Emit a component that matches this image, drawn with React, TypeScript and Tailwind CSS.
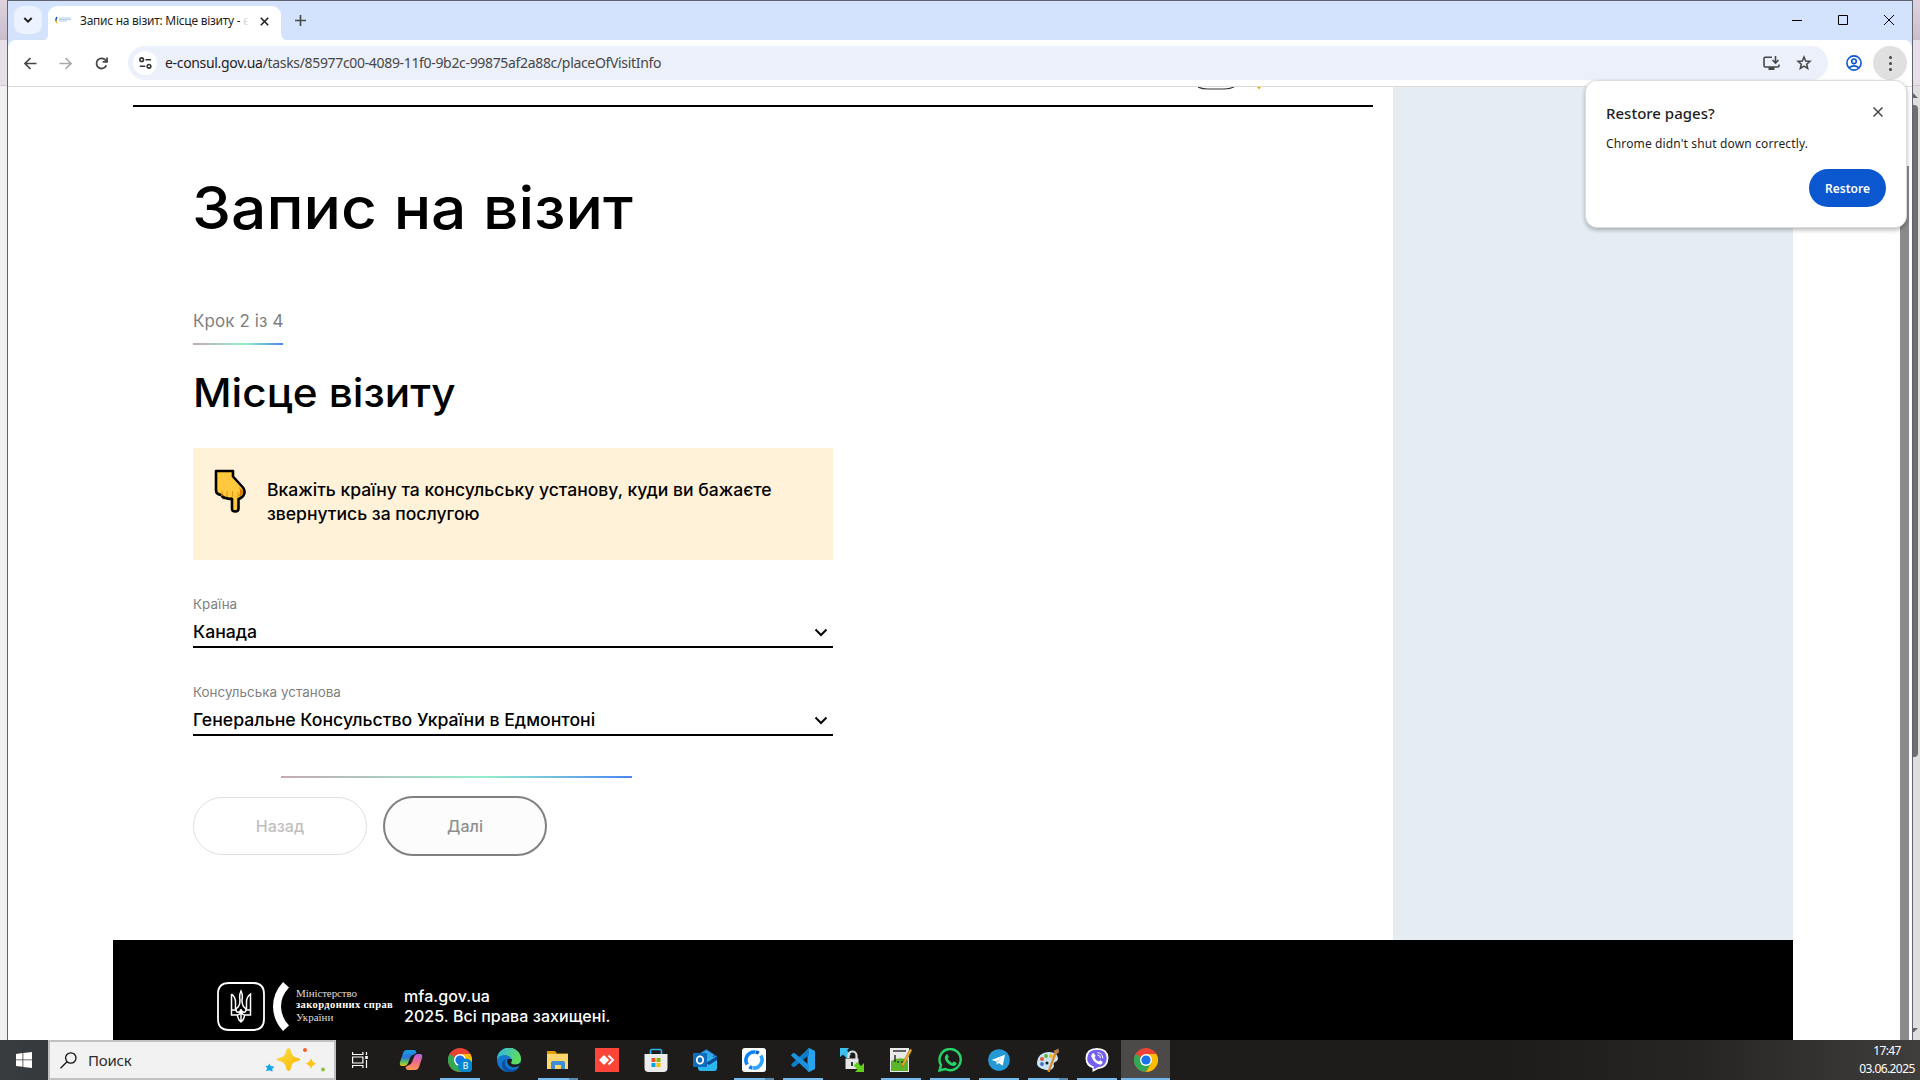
import React from "react";
import type { ReactNode } from "react";

const ui = "font-['Noto_Sans',sans-serif]";

function Tab() {
  return (
    <div className="flex h-10 items-start bg-[#d3e3fd] pl-[6px]">
      <div className="mt-[5px] flex h-7 w-7 items-center justify-center rounded-[9px] bg-[#ecf2fe]">
        <svg width="10" height="8" viewBox="0 0 10 8" fill="none" stroke="#1f1f1f" strokeWidth="2"><path d="M1.3 2 5 5.7 8.700 2" /></svg>
      </div>
      <div className="h-10 w-[6px] bg-white"><div className="h-10 w-[6px] rounded-br-[6px] bg-[#d3e3fd]" /></div>
      <div className="mt-[5px] flex h-[35px] w-[233px] items-start rounded-t-[9px] bg-white pl-[7px] pt-[6px]">
        <svg width="17" height="16" viewBox="0 0 17 16">
          <path d="M2 5C.8 6.500.8 7.500 1 9" stroke="#2453b8" strokeWidth="1.500" fill="none" />
          <path d="M1 9c.2 1 .8 1.800 1.500 2" stroke="#f5c518" strokeWidth="1.500" fill="none" />
          <path d="M4 6h12M4 7.500h12M4 9h8" stroke="#b3cbea" strokeWidth="1.200" />
        </svg>
        <div className="relative ml-[8px] h-[18px] w-[170px] whitespace-nowrap">
          <div className={`${ui} text-[12px] leading-[18px] tracking-[-0.27px] text-[#1f1f1f]`}>Запис на візит: Місце візиту - є</div>
          <div className="absolute right-0 top-0 h-[18px] w-[10px] bg-linear-to-r from-white/60 to-white" />
        </div>
        <svg className="ml-[10px] mt-[5px]" width="9" height="9" viewBox="0 0 9 9" stroke="#1f1f1f" strokeWidth="1.600"><path d="M.8.8l7.400 7.400M8.200.8.8 8.200" /></svg>
      </div>
      <div className="h-10 w-2 bg-white"><div className="h-10 w-2 rounded-bl-[8px] bg-[#d3e3fd]" /></div>
      <svg className="ml-[6px] mt-[14px]" width="11" height="11" viewBox="0 0 11 11" stroke="#444746" strokeWidth="1.600"><path d="M5.500 0v11M0 5.500h11" /></svg>
      <div className="ml-auto mr-[18px] mt-[14px] flex gap-9">
        <svg width="10" height="10" viewBox="0 0 10 10" stroke="#000"><path d="M0 5.500h10" /></svg>
        <svg width="10" height="10" viewBox="0 0 10 10" stroke="#000" fill="none"><path d="M.5.5h9v9h-9z" /></svg>
        <svg width="10" height="10" viewBox="0 0 10 10" stroke="#000"><path d="M0 0l10 10M10 0 0 10" /></svg>
      </div>
    </div>
  );
}

function Toolbar() {
  return (
    <div className="h-[46px] bg-[#d3e3fd]">
      <div className="flex h-[46px] items-center rounded-t-[8px] bg-white">
        <svg className="ml-[16px]" width="13" height="13" viewBox="0 0 13 13" fill="none" stroke="#444746" strokeWidth="1.700"><path d="M12.500 6.500H1.500M6.500 1 1 6.500l5.500 5.500" /></svg>
        <svg className="ml-[22px]" width="13" height="13" viewBox="0 0 13 13" fill="none" stroke="#a9abaa" strokeWidth="1.700"><path d="M.5 6.500h11M6.500 1 12 6.500 6.500 12" /></svg>
        <svg className="ml-[23px]" width="13" height="13" viewBox="0 0 13 13" fill="none" stroke="#444746" strokeWidth="1.800"><path d="M11.300 8.400A5.100 5.100 0 1 1 10.600 3.200L12 4.800" /><path d="M12 .5v4.300H7.700" /></svg>
        <div className="ml-[20px] flex h-[34px] w-[1700px] items-center rounded-full bg-[#ecf0fa] pl-[5px]">
          <div className="flex h-6 w-6 items-center justify-center rounded-full bg-white">
            <svg width="13" height="12" viewBox="0 0 13 12" fill="none" stroke="#333" strokeWidth="1.600"><circle cx="2.700" cy="2.700" r="1.800" /><path d="M6.500 2.700H12M.8 9.300h5.500" /><circle cx="10" cy="9.300" r="1.800" /></svg>
          </div>
          <span className={`${ui} ml-[8px] text-[14px] leading-5 tracking-[-0.33px] text-[#474747]`}><span className="text-[#1f1f1f]">e-consul.gov.ua</span>/tasks/85977c00-4089-11f0-9b2c-99875af2a88c/placeOfVisitInfo</span>
          <svg className="ml-auto" width="17" height="15" viewBox="0 0 17 15" fill="none" stroke="#444746" strokeWidth="1.600"><path d="M9 1.300H2.300Q1 1.300 1 2.600v7Q1 11 2.300 11h12.400Q16 11 16 9.700V8.500M12.500 0v6.500M9.500 4l3 3 3-3" /><path d="M5.500 12.500h6" strokeWidth="3" /></svg>
          <svg className="ml-[16px] mr-[16px]" width="16" height="16" viewBox="0 0 16 16" fill="none" stroke="#444746" strokeWidth="1.500"><path d="M8 2l1.700 4 4.300.4-3.300 2.800 1 4.300L8 11.200l-3.700 2.300 1-4.300L2 6.400 6.300 6z" /></svg>
        </div>
        <svg className="ml-[18px]" width="16" height="16" viewBox="0 0 16 16" fill="none" stroke="#0b57d0" strokeWidth="1.600"><circle cx="8" cy="8" r="7.100" /><circle cx="8" cy="6.300" r="2.300" /><path d="M3.200 12.700Q8 9 12.800 12.700" /></svg>
        <div className="ml-[11px] flex h-[34px] w-[34px] flex-col items-center justify-center gap-[3px] rounded-full bg-[#e0e0e0]">
          <i className="h-[3px] w-[3px] rounded-full bg-[#444]" /><i className="h-[3px] w-[3px] rounded-full bg-[#444]" /><i className="h-[3px] w-[3px] rounded-full bg-[#444]" />
        </div>
      </div>
    </div>
  );
}

function RestorePopup() {
  return (
    <div className={`${ui} absolute left-[1585px] top-[80px] h-[148px] w-[322px] rounded-[12px] border border-[#dcdcdc] bg-white pl-[20px] pr-[20px] shadow-[0_2px_4px_rgba(0,0,0,0.28)]`}>
      <div className="mt-[20px] flex items-start justify-between">
        <span className="text-[15px] font-medium leading-[24px] text-[#1f1f1f]">Restore pages?</span>
        <svg className="mr-[3px] mt-[6px]" width="10" height="10" viewBox="0 0 10 10" stroke="#444746" strokeWidth="1.500"><path d="M.5.500l9 9M9.500.500l-9 9" /></svg>
      </div>
      <div className="mt-[10px] text-[12px] leading-[18px] tracking-[0.14px] text-[#1f1f1f]">Chrome didn't shut down correctly.</div>
      <div className="mt-[16px] flex justify-end">
        <div className="flex h-[38px] w-[77px] items-center justify-center rounded-full bg-[#0b57d0] pt-px text-[12px] font-semibold text-white">Restore</div>
      </div>
    </div>
  );
}

function Field({ label, value }: { label: string; value: string }) {
  return (
    <div className="mt-9 w-[640px] border-b-2 border-black pb-[2px]">
      <div className="w-max origin-left scale-x-[1.034] text-[13px] leading-4 text-[#7f7f7f]">{label}</div>
      <div className="mt-2 flex h-6 items-center justify-between pr-[5px] text-[17px] font-medium leading-6">
        <span className="origin-left scale-x-[1.038]">{value}</span>
        <svg width="14" height="9" viewBox="0 0 14 9" fill="none" stroke="#000" strokeWidth="2"><path d="M1.500 1.500 7 7l5.500-5.500" /></svg>
      </div>
    </div>
  );
}

function Hand() {
  return (
    <svg className="ml-[21px] mt-[21px] shrink-0" width="33" height="45" viewBox="0 0 33 45">
      <path d="M2 2h17v5.500l10 11q2.500 3.500 1 7-1.500 3.500-5.500 4.500v9.500Q24.500 42.500 21.200 42.500T18 39.500V29.500q-3 1-6-.5-3.500 0-4.500-3-5.500-.5-5.500-5z" fill="#ffc83d" stroke="#000" strokeWidth="2.600" strokeLinejoin="round" />
      <path d="M25 18q2 4 0 9 5 0 4-5z" fill="#d67d00" />
      <path d="M8 22v5M13 22v6M18.500 22v7M24 23v5" stroke="#e09a1a" strokeWidth="1.200" />
    </svg>
  );
}

function Footer() {
  return (
    <div className="ml-[105px] flex h-[100px] w-[1680px] shrink-0 bg-black text-white">
      <svg className="ml-[104px] mt-[42px]" width="48" height="49" viewBox="0 0 48 49" fill="none" stroke="#fff">
        <path d="M12 1h24Q47 1 47 12v25Q47 48 36 48H12Q1 48 1 37V12Q1 1 12 1z" strokeWidth="1.800" />
        <path d="M24 9q-2 4-1 9 0 6-3 8 -2 2 0 4 2 1 4-2 2 3 4 2 2-2 0-4-3-2-3-8 1-5-1-9zM24 27v13M14.500 12v21h6q0 4 3.500 7 3.500-3 3.500-7h6V12q-4 3-4 8v7M14.500 12q4 3 4 8v7M14.500 28h5M28.500 28h5M20.500 33q3.500-1 3.500-5 0 4 3.500 5" strokeWidth="1.500" />
      </svg>
      <svg className="ml-[8px] mt-[42px]" width="16" height="49" viewBox="0 0 16 49"><path d="M10 0l6 5.500Q8 14 8 24.500T16 43.500L10 49Q0 38 0 24.500T10 0z" fill="#fff" /></svg>
      <div className="ml-[7px] mt-[47px] w-[108px] whitespace-nowrap font-['Liberation_Serif',serif] text-[11px] leading-[12px]">
        <div className="tracking-[-0.1px] text-[#ddd]">Міністерство</div>
        <div className="text-[10.500px] font-bold tracking-[0.4px]">закордонних справ</div>
        <div className="text-[#ddd]">України</div>
      </div>
      <div className="mt-[46px] text-[16px] font-medium leading-5 tracking-[0.07px]">
        <div>mfa.gov.ua</div>
        <div>2025. Всі права захищені.</div>
      </div>
    </div>
  );
}

function ChromeLogo() {
  return (
    <>
      <circle cx="12" cy="12" r="12" fill="#ea4335" />
      <path d="M1.600 6A12 12 0 0 0 12 24L17.200 15 12 12z" fill="#34a853" />
      <path d="M12 24A12 12 0 0 0 22.400 6H12v6l5.200 3z" fill="#fbbc04" />
      <circle cx="12" cy="12" r="6" fill="#fff" />
      <circle cx="12" cy="12" r="4.600" fill="#1a73e8" />
    </>
  );
}

const icons: { art: ReactNode; run: "none" | "one" | "many" | "active" }[] = [
  { run: "none", art: (<>
    <defs>
      <linearGradient id="cpa" x1="0" y1="0" x2="0" y2="1"><stop offset="0" stopColor="#1aa0e8" /><stop offset=".45" stopColor="#2a72d8" /><stop offset=".75" stopColor="#57c25a" /><stop offset="1" stopColor="#f0c419" /></linearGradient>
      <linearGradient id="cpb" x1="0" y1="0" x2="0" y2="1"><stop offset="0" stopColor="#b560e8" /><stop offset=".5" stopColor="#f06a8a" /><stop offset="1" stopColor="#fd9a56" /></linearGradient>
    </defs>
    <path d="M8 2h7q2 0 2.500 3L14 7q-2 0-3 3l-2 5q-1 3-4 3H3q-3 0-2-4l3-9q1-3 4-3z" fill="url(#cpa)" />
    <path d="M16 22H9q-2 0-2.500-3L10 17q2 0 3-3l2-5q1-3 4-3h2q3 0 2 4l-3 9q-1 3-4 3z" fill="url(#cpb)" />
  </>) },
  { run: "one", art: (<><ChromeLogo /><circle cx="17.500" cy="18" r="7.500" fill="#0288d1" /><text x="17.500" y="21.200" fontSize="9" fill="#fff" textAnchor="middle" fontFamily="Roboto">B</text></>) },
  { run: "none", art: (<>
    <defs><linearGradient id="edg" x1="0" y1="0" x2="1" y2=".4"><stop offset="0" stopColor="#2fb4ee" /><stop offset="1" stopColor="#5fdc5a" /></linearGradient></defs>
    <circle cx="12" cy="12" r="12" fill="#1477cf" />
    <path d="M0 11.500A12 12 0 0 1 24 11.500q0 5-6 5-4 0-4-2 1.500-2 .5-4Q12.500 7 8 7 2 7 0 11.500z" fill="url(#edg)" />
    <path d="M9 11q-3 6 2 9.500 5 3 11-1-5 6-12 4.300Q4 21 5 15q.8-3 4-4z" fill="#0c4f9f" />
    <path d="M10.500 11q-1.500 5 3 7.500 4 2 9.500-1l1-5q-1 4.500-6 4-4 0-4-2 1.500-1.500.5-3.500z" fill="#1e1c1b" />
  </>) },
  { run: "many", art: (<><path d="M1 3h8l2 2.500h11V19H1z" fill="#e3a100" /><path d="M1 6h21v15H1z" fill="#ffd66b" /><path d="M5 21v-6q0-2 2-2h10q2 0 2 2v6h-4v-4H9v4z" fill="#3b8fd8" /></>) },
  { run: "none", art: (<><path d="M0 0h24v24H0z" fill="#ff4538" /><path d="M4 12l5-5 5 5-5 5z" fill="#fff" /><path d="M13.500 7.500 18 12l-4.500 4.500" fill="none" stroke="#fff" strokeWidth="2" /></>) },
  { run: "none", art: (<><path d="M6.500 7V3q0-1.500 1.500-1.500h8q1.500 0 1.500 1.500v4" fill="none" stroke="#27b1ee" strokeWidth="1.700" /><path d="M.5 6h23v14q0 4-4 4h-15q-4 0-4-4z" fill="#ececec" /><path d="M7.500 10h4v4h-4z" fill="#f25022" /><path d="M12.500 10h4v4h-4z" fill="#7fba00" /><path d="M7.500 15h4v4h-4z" fill="#00a4ef" /><path d="M12.500 15h4v4h-4z" fill="#ffb900" /></>) },
  { run: "none", art: (<><path d="M3 8 13 1l11 7v5H3z" fill="#1b5fb0" /><path d="M8 5l6-3 7 5-6 6z" fill="#34a8ea" /><path d="M5 12l19-4v12q0 3-3 3H8q-3 0-3-3z" fill="#2bb8ee" /><path d="M13 15 24 8v4l-8 5z" fill="#0a4b98" /><path d="M0 6q0-1 1-1h12q1 0 1 1v12q0 1-1 1H1q-1 0-1-1z" fill="#0f6cbd" /><ellipse cx="7" cy="12" rx="3.200" ry="3.600" fill="none" stroke="#fff" strokeWidth="1.800" /></>) },
  { run: "many", art: (<><rect width="24" height="24" rx="3" fill="#fff" /><path d="M5.200 16.500A8.200 8.200 0 0 1 13 4" fill="none" stroke="#0a84f5" strokeWidth="3.600" /><path d="M13.500 4q1.700.2 3.200 1.200" fill="none" stroke="#0a5fd0" strokeWidth="3.600" /><path d="M18.800 7.500A8.200 8.200 0 0 1 11 20" fill="none" stroke="#2fa4ff" strokeWidth="3.600" /><path d="M10.500 20q-1.700-.2-3.200-1.200" fill="none" stroke="#0a84f5" strokeWidth="3.600" /></>) },
  { run: "one", art: (<><path d="M18 0l6 3v18l-6 3-1.500-1V1z" fill="#29a5f0" /><path d="M18 0 1 15.500 0 17l2 2h1.500L18 7z" fill="#0d7fca" /><path d="M18 24 1 8.500 0 7.500 2 5h1.500L18 17z" fill="#1b92de" /></>) },
  { run: "none", art: (<><path d="M0 0h9L7 2.500l4 4-4 4-4-4L0 9z" fill="#3ec0ee" /><path d="M8.500 10V7.500a4 4 0 0 1 8 0V11" fill="none" stroke="#ddd" strokeWidth="2.200" /><path d="M5.500 10.500h13V21h-13z" fill="#e6e6e6" /><path d="M11 14h2v4h-2z" fill="#333" /><path d="M24 24h-9l2.500-2.500-4-4 3.500-3.500 4 4L24 15z" fill="#5fd01c" /></>) },
  { run: "one", art: (<><path d="M1 0h19v24H1z" fill="#e9e9e9" /><path d="M2 13q8-5 17-1v11H2z" fill="#5ab52a" /><path d="M4 3h13M6 7v7M8 14h2M12 14h2" stroke="#333" strokeWidth="1.500" /><path d="M21 1l2 1-8 15-2 2v-3z" fill="#f0b429" stroke="#9b6a1a" strokeWidth=".6" /></>) },
  { run: "one", art: (<><path d="M1.500 22.500 3 17A10.600 10.600 0 1 1 7.200 21z" fill="#1e1c1b" stroke="#25d366" strokeWidth="2.400" /><path d="M8.200 6.500q1.300-.7 1.800.8l.7 1.700q.1.700-1 1.700 1.500 3 4.500 4.200 1.200-1.700 1.800-1.500l2.500 1.300q.5 3-3 3.300-3 0-6.500-3.500-4-4.300-.8-8z" fill="#25d366" /></>) },
  { run: "one", art: (<><circle cx="12" cy="12" r="10.800" fill="#2499d6" /><path d="M4.500 12 18 6.700l-2.300 11-4-2.800-2 1.900-.3-3.300z" fill="#fff" /><path d="M9.400 13.500 15.500 9l-5 5.500-.8 2.300z" fill="#a9d3ea" /></>) },
  { run: "many", art: (<><path d="M1 14Q2 5 12 4q9-.5 10 6 0 3-3 4-2 1-1 4-1 5-8 4Q0 20 1 14z" fill="#c9e4f5" /><circle cx="6" cy="11" r="2" fill="#e2572f" /><circle cx="10" cy="8" r="1.900" fill="#5cb531" /><circle cx="15" cy="8" r="1.900" fill="#f3b91f" /><circle cx="6" cy="16" r="1.900" fill="#4770c9" /><circle cx="11" cy="15" r="1.500" fill="#1e1c1b" /><path d="M19.500 5 12.500 24" stroke="#d98a2b" strokeWidth="2.200" /><path d="M17.500 3l5-2.500L23 4l-3 3z" fill="#b97f4a" /></>) },
  { run: "one", art: (<><path d="M12 0q11 0 11.500 10Q23 20.500 13 21l-5.500 3v-4Q.5 18 .5 10 1 0 12 0z" fill="#fff" /><path d="M12 1.800q9.500 0 9.800 8.400-.4 8.600-9 9l-4 2.400v-3.200Q2.200 16.500 2.200 10.200 2.700 1.800 12 1.800z" fill="#7360f2" /><path d="M7.500 5.500q1.300-.8 2 .5l1 1.700q.2.800-1 1.600 1 3 4 4.200 1.200-1.400 2-1l2 1.300q.5 2-2 3Q9 15.500 6.300 8.500q-.2-2 1.200-3z" fill="#fff" /><path d="M12.500 4.700q5 .2 5.300 5.600M12.500 7q2.800.2 3 3.200" stroke="#fff" fill="none" /></>) },
  { run: "active", art: <ChromeLogo /> },
];

function Taskbar() {
  return (
    <div className={`${ui} flex h-10 w-[1920px] shrink-0 bg-[linear-gradient(90deg,#3a3d3f_0px,#36393b_48px,#1e1c1b_336px,#1e1c1b_1500px,#262523_1700px,#403e3c_1920px)]`}>
      <div className="flex w-12 items-center justify-center">
        <svg width="16" height="16" viewBox="0 0 16 16" fill="#fff"><path d="M0 2l6.500-1v6.500H0zM7.300.9 16 0v7.500H7.300zM0 8.300h6.500v6.500L0 14zM7.300 8.300H16V16l-8.700-1.100z" /></svg>
      </div>
      <div className="flex w-[288px] items-center border-2 border-[#c1c1c1] bg-[#f2f2f2]">
        <svg className="ml-[10px]" width="17" height="17" viewBox="0 0 17 17" fill="none" stroke="#111" strokeWidth="1.300"><circle cx="10.800" cy="6" r="5.200" /><path d="M7 9.800.5 16.300" /></svg>
        <span className="ml-[11px] text-[15px] tracking-[-0.2px] text-[#2b2b2b]">Поиск</span>
        <svg className="ml-auto mr-[8px]" width="62" height="26" viewBox="0 0 62 26">
          <defs><linearGradient id="st" x1="0" y1="0" x2="1" y2="1"><stop offset="0" stopColor="#ffe04a" /><stop offset="1" stopColor="#f7b500" /></linearGradient></defs>
          <path d="M24.500 1q1.800 0 2.800 4.500 1 4 5 5 4.200 1 4.200 2t-4.200 2q-4 1-5 5-1 4.500-2.800 4.500t-2.800-4.500q-1-4-5-5-4.200-1-4.200-2t4.200-2q4-1 5-5Q22.700 1 24.500 1z" fill="url(#st)" />
          <path d="M47 11q1.200 4.800 5.500 5.700Q48.200 17.700 47 22q-1.200-4.300-5.500-5.300Q45.800 15.800 47 11z" fill="#fcc419" />
          <path d="M5 16.500l2.200 2.700 3.300.3-2.200 2.300.2 3-3-1.500-3.500 1 1.200-3-1.700-2.300 2.800-.3z" fill="#12a5f0" />
          <circle cx="41" cy="3" r="2" fill="#f4602a" /><circle cx="59" cy="22.500" r="2" fill="#8bc34a" />
        </svg>
      </div>
      <div className="flex w-[50px] items-center pl-4">
        <svg width="16" height="16" viewBox="0 0 16 16" fill="none" stroke="#fff" strokeWidth="1.200"><path d="M.6 0v2.500h10.300V0M.6 16v-2.500h10.300V16M.6 5h10.300v6H.6zM14.500 0v3M14.500 8v8" /><path d="M13.200 4h2.600v3h-2.600z" fill="#fff" stroke="none" /></svg>
      </div>
      {icons.map(({ art, run }, i) => (
        <div key={i} className={run === "active" ? "flex w-[49px] flex-col items-center bg-[#4b4a49]" : "flex w-[49px] flex-col items-center"}>
          <svg className="mt-[8px] shrink-0" width="24" height="24" viewBox="0 0 24 24">{art}</svg>
          {run === "one" && <div className="mt-auto h-[2px] w-10 bg-[#76b9ed]" />}
          {run === "many" && <div className="mt-auto flex h-[2px] w-10"><div className="w-[31px] bg-[#76b9ed]" /><div className="flex-1 bg-[#5a8ab0]" /></div>}
          {run === "active" && <div className="mt-auto h-[2px] w-full bg-[#76b9ed]" />}
        </div>
      ))}
      <div className="ml-auto w-[66px] whitespace-nowrap pt-[2px] text-center text-[12px] leading-[18px] tracking-[-0.6px] text-white">
        <div>17:47</div>
        <div>03.06.2025</div>
      </div>
    </div>
  );
}

function Backdrop({ side }: { side: "left" | "right" }) {
  return (
    <div className={side === "left" ? "flex w-[7px] flex-col bg-[#f1f1f1]" : "flex w-[7px] flex-col bg-[#dedede]"}>
      <div className="h-10 bg-linear-to-b from-[#dcd3df] to-[#c9bdca]" />
      <div className="h-[46px] border-b border-[#cfc6d0] bg-[#e6dfe8]" />
      {side === "right" && (<>
        <svg className="mt-[7px]" width="7" height="5" viewBox="0 0 7 5"><path d="M0 0l5 5H0z" fill="#666" /></svg>
        <div className="mt-[7px] h-[652px] w-[5px] rounded-r-[4px] bg-[#6f6f6f]" />
        <svg className="mt-[271px]" width="7" height="6" viewBox="0 0 7 6"><path d="M0 0h5L1 4H0z" fill="#666" /></svg>
      </>)}
    </div>
  );
}

export default function App() {
  return (
    <div className="relative flex h-[1080px] w-[1920px] flex-col overflow-hidden bg-white">
      <div className="flex h-[1040px] shrink-0">
        <Backdrop side="left" />
        <div className="flex w-[1906px] flex-col border-x border-t border-[#61646e] bg-white">
          <div className="-mt-px border-t border-[#61646e]"><Tab /></div>
          <div className="-mt-px"><Toolbar /></div>
          <div className="flex h-[954px] overflow-hidden border-t border-[#dcdcdc]">
            <div className="flex w-[1892px] shrink-0 flex-col font-['Inter',sans-serif] text-black">
              <div className="flex h-[853px] shrink-0">
                <div className="w-[1385px] pl-[125px]">
                  <div className="flex h-[18px] items-start pl-[1065px]">
                    <svg width="64" height="3" viewBox="0 0 64 3" fill="none"><path d="M0 0q4 2 10 2h16q6 0 10-2" stroke="#333" strokeWidth="1.200" /><path d="M59 0h4l-2 2.500z" fill="#f5a800" /></svg>
                  </div>
                  <div className="h-[2px] w-[1240px] bg-black" />
                  <div className="pl-[60px]">
                    <h1 className="-ml-px mt-[65px] w-max origin-left scale-x-[1.056] text-[59px] font-medium leading-[72px]">Запис на візит</h1>
                    <div className="mt-[65px] text-[17px] leading-6 tracking-[0.1px] text-[#7f7f7f]">Крок 2 із 4</div>
                    <div className="mt-[10px] h-[2px] w-[90px] bg-[linear-gradient(90deg,#c4aab2,#94eecb_58%,#4a86f7)]" />
                    <h2 className="mt-6 w-max origin-left scale-x-[1.057] text-[40px] font-medium leading-[48px]">Місце візиту</h2>
                    <div className="mt-[31px] flex h-[112px] w-[640px] bg-[#fff2d9]">
                      <Hand />
                      <div className="ml-[20px] mt-[30px] h-12 origin-left scale-x-[1.032] whitespace-nowrap text-[17px] font-medium leading-6">Вкажіть країну та консульську установу, куди ви бажаєте<br />звернутись за послугою</div>
                    </div>
                    <Field label="Країна" value="Канада" />
                    <Field label="Консульська установа" value="Генеральне Консульство України в Едмонтоні" />
                    <div className="ml-[88px] mt-10 h-[2px] w-[351px] bg-[linear-gradient(90deg,#c4aab2,#94eecb_58%,#4a86f7)]" />
                    <div className="mt-[18px] flex items-center gap-4 text-[16px] font-medium">
                      <div className="flex h-[58px] w-[174px] items-center justify-center rounded-full border border-[#e0e0e0] text-[#bfbfbf]">Назад</div>
                      <div className="flex h-[60px] w-[164px] items-center justify-center rounded-full border-2 border-[#808080] bg-[#fcfcfc] text-[#8f8f8f]">Далі</div>
                    </div>
                  </div>
                </div>
                <div className="w-[400px] bg-[#e5edf3]" />
              </div>
              <Footer />
            </div>
            <div className="mt-[79px] w-[9px] bg-[#8b8b8b]" />
          </div>
        </div>
        <Backdrop side="right" />
      </div>
      <Taskbar />
      <RestorePopup />
    </div>
  );
}
